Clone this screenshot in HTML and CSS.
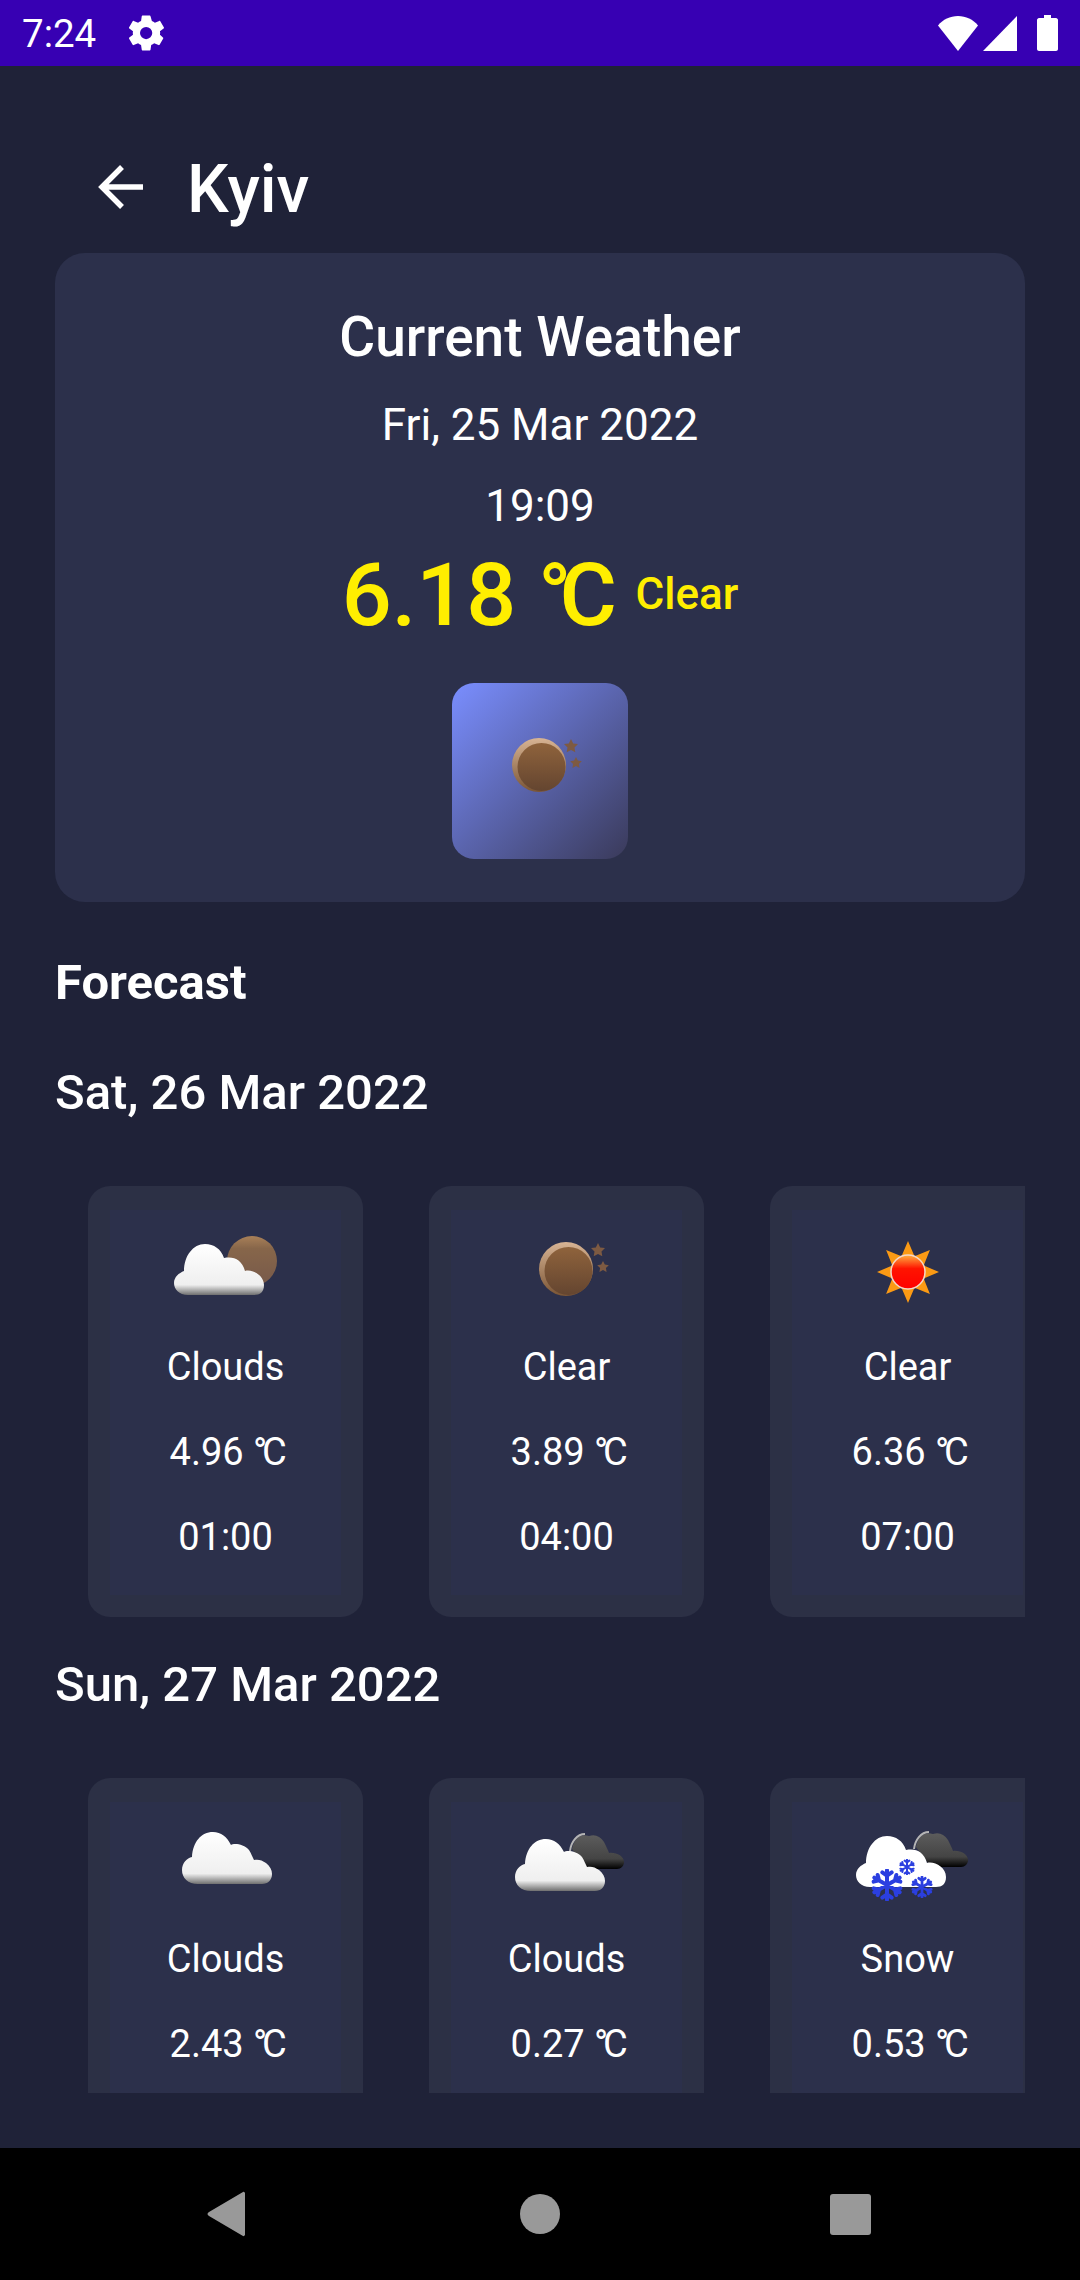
FILE: index.html
```html
<!DOCTYPE html>
<html lang="en">
<head>
    <meta charset="UTF-8">
    <meta name="viewport" content="width=device-width, initial-scale=1.0">
    <title>Kyiv - Weather</title>
    <link rel="stylesheet" href="styles.css">
</head>
<body>
    <!-- shared gradients and weather shapes -->
    <svg class="icon-defs" aria-hidden="true">
        <defs>
            <linearGradient id="moon-fill" x1="0" y1="0" x2="0" y2="1">
                <stop offset="0" stop-color="#8f633c"/>
                <stop offset="1" stop-color="#644530"/>
            </linearGradient>
            <linearGradient id="moon-edge" x1="0" y1="0" x2="0" y2="1">
                <stop offset="0" stop-color="#d8b494"/>
                <stop offset="1" stop-color="#7a5535"/>
            </linearGradient>
            <linearGradient id="cloud-moon-fill" x1="0" y1="0" x2="0" y2="1">
                <stop offset="0" stop-color="#a98058"/>
                <stop offset="0.25" stop-color="#87664a"/>
                <stop offset="1" stop-color="#77594a"/>
            </linearGradient>
            <linearGradient id="cloud-fill" x1="0" y1="0" x2="0" y2="1">
                <stop offset="0" stop-color="#ffffff"/>
                <stop offset="0.8" stop-color="#efefef"/>
                <stop offset="1" stop-color="#707070"/>
            </linearGradient>
            <linearGradient id="dark-cloud" x1="0" y1="0" x2="0" y2="1">
                <stop offset="0" stop-color="#5c5c5c"/>
                <stop offset="0.7" stop-color="#444444"/>
                <stop offset="1" stop-color="#000000"/>
            </linearGradient>
            <linearGradient id="sun-fill" x1="0" y1="0" x2="0" y2="1">
                <stop offset="0" stop-color="#ffb040"/>
                <stop offset="0.4" stop-color="#ff1400"/>
                <stop offset="1" stop-color="#ff0000"/>
            </linearGradient>
            <g id="moon-shape">
                <circle cx="39" cy="30" r="27" fill="url(#moon-edge)"/>
                <circle cx="41.500" cy="32" r="24" fill="url(#moon-fill)"/>
                <path d="M71 4l2.200 4.400 4.800.7-3.500 3.400.8 4.800-4.300-2.300-4.300 2.300.8-4.800-3.500-3.400 4.800-.7z" fill="#7d5a42"/>
                <path d="M76 22l1.800 3.600 4 .6-2.900 2.800.7 4-3.600-1.900-3.600 1.900.7-4-2.900-2.800 4-.6z" fill="#7d5a42"/>
            </g>
            <path id="cloud-puffy" d="M14 51C5 51 0 45 0 39c0-6 5-10 10-12C10 12 19 0 31 0c9 0 16 5 19 14 10-2 18 2 21 13 7-2 19 4 19 14 0 7-4 10-10 10z"/>
            <path id="cloud-tall" d="M16 52C6 52 0 46 0 38c0-7 5-12 10-13C11 10 19 0 31 0c8 0 14 5 18 13 3-2 13-1 18 5 2 3 4 8 5 10 4-1 8 0 12 3 4 3 6 7 6 11 0 6-4 10-10 10z"/>
            <path id="cloud-dark" d="M3 16C5 6 11 0 20 3c6-2 11 0 15 6 2 4 4 8 5 11 7-1 15 3 15 9 0 4-3 7-7 7H18z"/>
            <symbol id="snowflake" viewBox="0 0 24 24">
                <path d="M12 1v22M2.500 6.500l19 11M21.500 6.500l-19 11M12 5L8.500 2.500M12 5l3.500-2.500M12 19l-3.500 2.500M12 19l3.500 2.500M6 8.500L2 9.500M6 8.500L5 4.500M18 15.500l4-1M18 15.500l1 4M18 8.500l4 1M18 8.500l1-4M6 15.500l-4-1M6 15.500l-1 4" fill="none" stroke="#2b3fe0" stroke-width="3" stroke-linecap="round"/>
            </symbol>
        </defs>
    </svg>

    <div class="status-bar">
        <span class="status-time">7:24</span>
        <svg class="status-gear" viewBox="0 0 24 24"><path d="M19.400 13c.1-.3.100-.7.100-1s0-.7-.1-1l2.100-1.600c.2-.2.300-.4.100-.7l-2-3.400c-.1-.2-.4-.3-.6-.2l-2.500 1c-.5-.4-1.100-.7-1.700-1L14 2.400c0-.2-.3-.4-.5-.4h-4c-.2 0-.5.200-.5.400l-.4 2.700c-.6.300-1.200.6-1.700 1l-2.500-1c-.2-.1-.5 0-.6.200l-2 3.400c-.2.300-.1.500.1.700L4 11c-.1.300-.1.700-.1 1s0 .7.100 1l-2.100 1.600c-.2.200-.3.400-.1.700l2 3.400c.1.200.4.300.6.200l2.500-1c.5.400 1.100.7 1.700 1l.4 2.700c0 .2.300.4.500.4h4c.2 0 .5-.2.500-.4l.4-2.700c.6-.3 1.200-.6 1.700-1l2.500 1c.2.100.5 0 .6-.2l2-3.400c.2-.3.100-.5-.1-.7zM11.500 15.500a3.500 3.500 0 1 1 0-7 3.500 3.500 0 0 1 0 7z" fill="#fff"/></svg>
        <div class="status-right">
            <svg class="status-wifi" viewBox="0 0 40 35"><path d="M20 35L0 9.500C5 3.500 12 0 20 0s15 3.500 20 9.500z" fill="#fff"/></svg>
            <svg class="status-signal" viewBox="0 0 34 35"><path d="M34 0v35H0z" fill="#fff"/></svg>
            <svg class="status-battery" viewBox="0 0 21 36"><path d="M7 0h7v3h5c1 0 2 1 2 2v29c0 1-1 2-2 2H2c-1 0-2-1-2-2V5c0-1 1-2 2-2h5z" fill="#fff"/></svg>
        </div>
    </div>

    <main class="screen">
        <div class="title-row">
            <svg class="back-arrow" viewBox="0 0 48 48"><path d="M46 24H5M25 4L5 24l20 20" fill="none" stroke="#fff" stroke-width="5.500"/></svg>
            <h1 class="city">Kyiv</h1>
        </div>

        <section class="current-card">
            <h2 class="current-title">Current Weather</h2>
            <div class="current-date">Fri, 25 Mar 2022</div>
            <div class="current-time">19:09</div>
            <div class="current-temp-row">
                <span class="current-temp">6.18 <span class="deg">°C</span></span>
                <span class="current-desc">Clear</span>
            </div>
            <div class="current-icon">
                <svg class="current-moon" viewBox="0 0 90 60"><use href="#moon-shape"/></svg>
            </div>
        </section>

        <h3 class="forecast-heading">Forecast</h3>

        <h3 class="day-heading">Sat, 26 Mar 2022</h3>
        <div class="hour-row">
            <div class="hour-card">
                <div class="hour-inner">
                    <div class="hour-icon">
                        <svg class="icon-svg" viewBox="0 0 104 60">
                            <circle cx="78" cy="22" r="25" fill="url(#cloud-moon-fill)"/>
                            <use href="#cloud-puffy" transform="translate(0 5)" fill="url(#cloud-fill)"/>
                        </svg>
                    </div>
                    <div class="hour-text">Clouds</div>
                    <div class="hour-text">4.96 <span class="deg">°C</span></div>
                    <div class="hour-text">01:00</div>
                </div>
            </div>
            <div class="hour-card">
                <div class="hour-inner">
                    <div class="hour-icon">
                        <svg class="icon-svg" viewBox="0 0 104 60"><use href="#moon-shape" transform="translate(12 0)"/></svg>
                    </div>
                    <div class="hour-text">Clear</div>
                    <div class="hour-text">3.89 <span class="deg">°C</span></div>
                    <div class="hour-text">04:00</div>
                </div>
            </div>
            <div class="hour-card">
                <div class="hour-inner">
                    <div class="hour-icon">
                        <svg class="icon-svg" viewBox="0 0 104 60">
                            <g transform="translate(0 3)">
                                <path d="M52-1l6.500 15.300L73.900 8.100l-6.200 15.400L83 30l-15.300 6.500 6.200 15.400-15.400-6.200L52 61l-6.500-15.300-15.400 6.200 6.200-15.400L21 30l15.300-6.500-6.200-15.400 15.400 6.200z" fill="#fb9a14"/>
                                <circle cx="52" cy="30" r="17" fill="url(#sun-fill)" stroke="#f4d8c8" stroke-width="1.500"/>
                            </g>
                        </svg>
                    </div>
                    <div class="hour-text">Clear</div>
                    <div class="hour-text">6.36 <span class="deg">°C</span></div>
                    <div class="hour-text">07:00</div>
                </div>
            </div>
        </div>

        <h3 class="day-heading day-heading-next">Sun, 27 Mar 2022</h3>
        <div class="hour-row">
            <div class="hour-card">
                <div class="hour-inner">
                    <div class="hour-icon">
                        <svg class="icon-svg" viewBox="0 0 104 60">
                            <use href="#cloud-tall" transform="translate(8 1)" fill="url(#cloud-fill)"/>
                        </svg>
                    </div>
                    <div class="hour-text">Clouds</div>
                    <div class="hour-text">2.43 <span class="deg">°C</span></div>
                </div>
            </div>
            <div class="hour-card">
                <div class="hour-inner">
                    <div class="hour-icon">
                        <svg class="icon-svg" viewBox="0 0 104 60">
                            <use href="#cloud-dark" transform="translate(54 2)" fill="url(#dark-cloud)"/>
                            <path d="M55 20C56 11 62 3 70 3" fill="none" stroke="#b5b5b5" stroke-width="2"/>
                            <use href="#cloud-tall" transform="translate(0 8)" fill="url(#cloud-fill)"/>
                        </svg>
                    </div>
                    <div class="hour-text">Clouds</div>
                    <div class="hour-text">0.27 <span class="deg">°C</span></div>
                </div>
            </div>
            <div class="hour-card">
                <div class="hour-inner">
                    <div class="hour-icon">
                        <svg class="icon-svg" viewBox="0 0 104 60">
                            <use href="#cloud-dark" transform="translate(57 0)" fill="url(#dark-cloud)"/>
                            <path d="M58 18C59 9 65 1 73 1" fill="none" stroke="#b5b5b5" stroke-width="2"/>
                            <use href="#cloud-puffy" transform="translate(0 5)" fill="#fff"/>
                            <svg x="15" y="38" width="32" height="32" viewBox="0 0 24 24"><use href="#snowflake"/></svg>
                            <svg x="43" y="28" width="16" height="16" viewBox="0 0 24 24"><use href="#snowflake"/></svg>
                            <svg x="55" y="45" width="22" height="22" viewBox="0 0 24 24"><use href="#snowflake"/></svg>
                        </svg>
                    </div>
                    <div class="hour-text">Snow</div>
                    <div class="hour-text">0.53 <span class="deg">°C</span></div>
                </div>
            </div>
        </div>
    </main>
    <div class="bottom-gap"></div>

    <div class="nav-bar">
        <svg class="nav-back" viewBox="0 0 38 46"><path d="M36 1c1-.5 2 .5 2 1.500v41c0 1-1 2-2 1.500L2 25c-2-1-2-3 0-4z" fill="#999"/></svg>
        <svg class="nav-home" viewBox="0 0 40 40"><circle cx="20" cy="20" r="20" fill="#999"/></svg>
        <svg class="nav-recent" viewBox="0 0 41 41"><rect width="41" height="41" rx="3" fill="#999"/></svg>
    </div>
</body>
</html>
```

FILE: styles.css
```css
html, body {
    margin: 0;
    padding: 0;
}
body {
    width: 1080px;
    height: 2280px;
    overflow: hidden;
    display: flex;
    flex-direction: column;
    background-color: #1f2238;
    color: #fff;
    font-family: 'Roboto', sans-serif;
}
.icon-defs {
    display: block;
    width: 0;
    height: 0;
}
.deg {
    letter-spacing: -0.14em;
}

/* status bar */
.status-bar {
    height: 66px;
    flex-shrink: 0;
    background-color: #3700b3;
    display: flex;
    align-items: center;
    padding: 0 22px;
    box-sizing: border-box;
}
.status-time {
    font-size: 38.5px;
    width: 104px;
}
.status-gear {
    width: 42px;
    height: 42px;
}
.status-right {
    margin-left: auto;
    display: flex;
    align-items: center;
}
.status-wifi {
    width: 40px;
    height: 35px;
    margin-right: 5px;
}
.status-signal {
    width: 34px;
    height: 35px;
    margin-right: 20px;
}
.status-battery {
    width: 21px;
    height: 36px;
}

/* scrolling content */
.screen {
    height: 2027px;
    flex-shrink: 0;
    overflow: hidden;
    padding: 0 55px;
    box-sizing: border-box;
}
.title-row {
    display: flex;
    align-items: center;
    height: 187px;
    padding: 55px 0 0 42px;
    box-sizing: border-box;
}
.back-arrow {
    width: 48px;
    height: 48px;
}
.city {
    margin: 4px 0 0 42px;
    font-size: 66px;
    font-weight: 500;
}
.current-card {
    height: 649px;
    background-color: #2c304b;
    border-radius: 30px;
    display: flex;
    flex-direction: column;
    align-items: center;
    padding-top: 53px;
    box-sizing: border-box;
}
.current-title {
    margin: 0;
    font-size: 55px;
    line-height: 62px;
    font-weight: 500;
}
.current-date,
.current-time {
    font-size: 44px;
    line-height: 52px;
    margin-top: 31px;
}
.current-time {
    margin-top: 29px;
}
.current-temp-row {
    display: flex;
    align-items: center;
    color: #ffee00;
    height: 92px;
    margin-top: 16px;
}
.current-temp {
    font-size: 88px;
    font-weight: 500;
}
.current-desc {
    font-size: 44px;
    font-weight: 500;
    margin-left: 31px;
}
.current-icon {
    width: 176px;
    height: 176px;
    margin-top: 43px;
    border-radius: 22px;
    background: linear-gradient(135deg, #7a8eff, #3a3a5a);
    display: flex;
    align-items: center;
    justify-content: center;
}
.current-moon {
    width: 90px;
    height: 60px;
    margin: 0 0 12px 10px;
    filter: blur(0.6px);
}
.forecast-heading {
    margin: 53px 0 0;
    font-size: 49px;
    line-height: 56px;
    font-weight: 700;
}
.day-heading {
    margin: 53px 0 0;
    font-size: 49px;
    line-height: 58px;
    font-weight: 500;
}
.day-heading-next {
    margin-top: 39px;
}

/* forecast cards */
.hour-row {
    display: flex;
    gap: 66px;
    margin-top: 64px;
    padding-left: 33px;
    overflow: hidden;
}
.hour-card {
    width: 275px;
    height: 431px;
    flex-shrink: 0;
    background-color: #2c3045;
    border-radius: 22px;
    padding: 24px 22px 22px;
    box-sizing: border-box;
}
.hour-inner {
    height: 100%;
    background-color: #2c304b;
    text-align: center;
}
.hour-icon {
    height: 118px;
    display: flex;
    align-items: center;
    justify-content: center;
}
.icon-svg {
    width: 104px;
    height: 60px;
    overflow: visible;
    filter: blur(0.6px);
}
.hour-text {
    font-size: 38px;
    line-height: 45px;
    margin-top: 40px;
}
.hour-icon + .hour-text {
    margin-top: 17px;
}

.bottom-gap {
    height: 55px;
    flex-shrink: 0;
}
.nav-bar {
    flex: 1;
    background-color: #000;
    display: flex;
    align-items: center;
    justify-content: center;
    padding-right: 2px;
}
.nav-back {
    width: 38px;
    height: 46px;
    margin-right: 275px;
}
.nav-home {
    width: 40px;
    height: 40px;
    margin-right: 270px;
}
.nav-recent {
    width: 41px;
    height: 41px;
}
```
